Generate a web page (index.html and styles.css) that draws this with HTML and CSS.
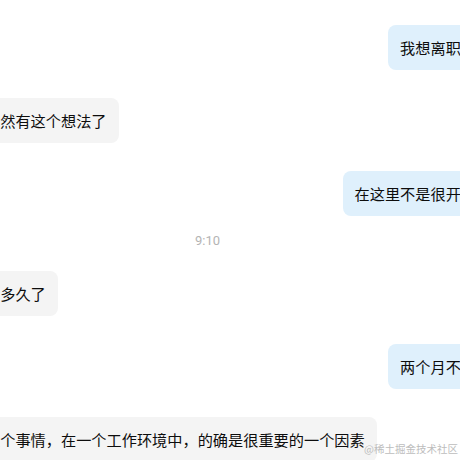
FILE: index.html
```html
<!DOCTYPE html>
<html lang="zh-CN">
<head>
<meta charset="utf-8">
<title>Chat</title>
<link rel="stylesheet" href="styles.css">
</head>
<body>
<div class="chat">
  <div class="msg msg-right"><div class="bubble bubble-me">我想离职了</div></div>
  <div class="msg msg-left"><div class="bubble bubble-other">突然有这个想法了</div></div>
  <div class="msg msg-right"><div class="bubble bubble-me">在这里不是很开心</div></div>
  <div class="time">9:10</div>
  <div class="msg msg-left"><div class="bubble bubble-other">有多久了</div></div>
  <div class="msg msg-right"><div class="bubble bubble-me">两个月不到</div></div>
  <div class="msg msg-left"><div class="bubble bubble-other">这个事情，在一个工作环境中，的确是很重要的一个因素</div></div>
</div>
<div class="watermark">@稀土掘金技术社区</div>
</body>
</html>
```
FILE: styles.css
```css
html, body {
  margin: 0;
  padding: 0;
  background: #ffffff;
}
body {
  width: 460px;
  height: 460px;
  overflow: hidden;
  position: relative;
  font-family: "Noto Sans CJK SC", "Noto Sans", sans-serif;
}
.chat {
  width: 515px;
  margin-left: -27px;
  padding-top: 25px;
  display: flex;
  flex-direction: column;
}
.msg {
  display: flex;
}
.msg + .msg {
  margin-top: 28px;
}
.msg-right {
  justify-content: flex-end;
}
.msg-left {
  justify-content: flex-start;
}
.bubble {
  padding: 12px;
  font-size: 15.2px;
  line-height: 21px;
  color: #0d0d0d;
  border-radius: 8px;
  white-space: nowrap;
}
.bubble-me {
  background: #dff0fc;
}
.bubble-other {
  background: #f4f4f4;
}
.time {
  padding: 16px 0 21px 222px;
  font-family: "Roboto", "Noto Sans", sans-serif;
  font-size: 13px;
  line-height: 18px;
  color: #b4b4b4;
}
.watermark {
  position: absolute;
  right: 2px;
  bottom: 4px;
  font-family: "Noto Sans CJK SC", sans-serif;
  font-size: 10.5px;
  line-height: 14px;
  color: #bdbdbd;
}
```
